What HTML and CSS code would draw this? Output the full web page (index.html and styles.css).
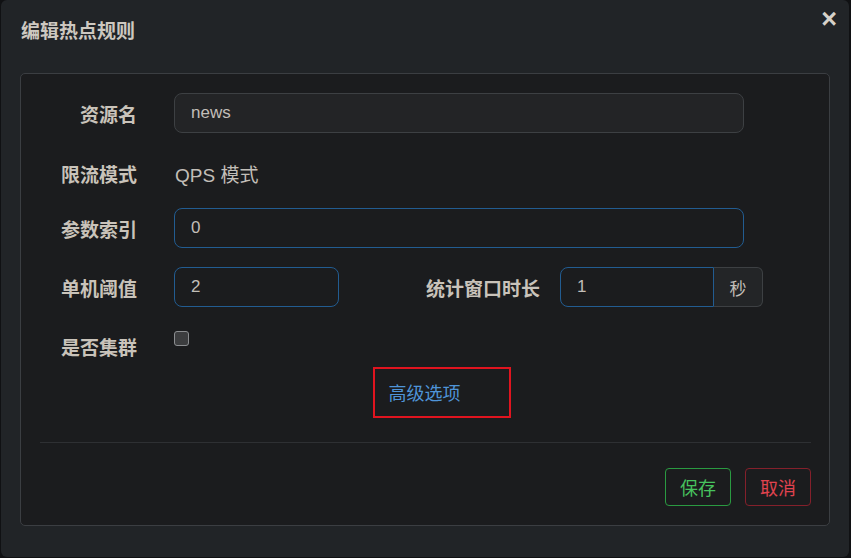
FILE: index.html
```html
<!DOCTYPE html>
<html lang="zh-CN">
<head>
<meta charset="utf-8">
<title>编辑热点规则</title>
<link rel="stylesheet" href="styles.css">
</head>
<body>
<div class="modal">
  <div class="modal-header">
    <h4 class="modal-title">编辑热点规则</h4>
    <button class="close" type="button">×</button>
  </div>
  <div class="card">
    <form class="form">
      <div class="row r1">
        <label class="label">资源名</label>
        <div class="field wide"><input class="input plain" type="text" value="news"></div>
      </div>
      <div class="row r2">
        <label class="label">限流模式</label>
        <div class="static">QPS 模式</div>
      </div>
      <div class="row r3">
        <label class="label">参数索引</label>
        <div class="field wide"><input class="input focus" type="text" value="0"></div>
      </div>
      <div class="row r4">
        <label class="label">单机阈值</label>
        <div class="field narrow"><input class="input focus" type="text" value="2"></div>
        <label class="label label-wide">统计窗口时长</label>
        <div class="input-group">
          <input class="input focus group-input" type="text" value="1">
          <span class="addon">秒</span>
        </div>
      </div>
      <div class="row r5">
        <label class="label">是否集群</label>
        <span class="checkbox"></span>
      </div>
      <div class="advanced">
        <a class="link" href="#">高级选项</a>
      </div>
    </form>
    <div class="divider"></div>
    <div class="footer">
      <button class="btn btn-save" type="button">保存</button>
      <button class="btn btn-cancel" type="button">取消</button>
    </div>
  </div>
</div>
</body>
</html>
```
FILE: styles.css
```css
* { box-sizing: border-box; }
html, body {
  margin: 0;
  padding: 0;
  background: #101113;
  font-family: "Liberation Sans", "Noto Sans CJK SC", sans-serif;
}
body { padding-left: 1px; }
.modal {
  width: 848px;
  height: 557px;
  background: #212427;
  border-radius: 6px;
  padding: 0 19px 0 19px;
  display: flex;
  flex-direction: column;
}
.modal-header {
  height: 73px;
  display: flex;
  align-items: flex-start;
  justify-content: space-between;
}
.modal-title {
  margin: 19px 0 0 1px;
  font-size: 19px;
  font-weight: bold;
  color: #cdc8c0;
  line-height: 26px;
}
.close {
  margin: 7px -7px 0 0;
  background: none;
  border: 0;
  padding: 0;
  font-family: "Liberation Sans", sans-serif;
  font-size: 27px;
  font-weight: bold;
  line-height: 24px;
  color: #d6d1c9;
}
.card {
  height: 453px;
  border: 1px solid #3b3e42;
  border-radius: 5px;
  background: #1b1c1e;
  padding: 19px 18px 19px 19px;
  display: flex;
  flex-direction: column;
}
.form { flex: 1; }
.row {
  display: flex;
  align-items: center;
  height: 40px;
}
.r2 { margin-top: 20px; }
.r3 { margin-top: 15px; }
.r4 { margin-top: 19px; }
.r5 { margin-top: 20px; align-items: flex-start; }
.label {
  width: 98px;
  text-align: right;
  font-size: 19px;
  font-weight: bold;
  color: #c9c3ba;
  margin-left: -1px;
  margin-right: 37px;
  flex-shrink: 0;
}
.r5 .label { margin-top: 6px; }
.label-wide {
  width: auto;
  margin-left: 87px;
  margin-right: 20px;
}
.field.wide { width: 570px; }
.field.narrow { width: 165px; }
.input {
  width: 100%;
  height: 40px;
  border-radius: 8px;
  background: #232426;
  border: 1px solid #3d4043;
  padding: 0 16px;
  font-family: "Liberation Sans", "Noto Sans CJK SC", sans-serif;
  font-size: 17px;
  color: #c2beb8;
  outline: none;
}
.input.focus {
  background: #1b1c1e;
  border-color: #225c91;
}
.static {
  font-size: 19px;
  color: #c2beb8;
  margin-left: 1px;
}
.input-group {
  display: flex;
  width: 203px;
  height: 40px;
}
.group-input {
  width: 154px;
  border-radius: 8px 0 0 8px;
}
.addon {
  flex: 1;
  display: flex;
  align-items: center;
  justify-content: center;
  background: #232527;
  border: 1px solid #3d4043;
  border-left: 0;
  border-radius: 0 6px 6px 0;
  font-size: 17px;
  color: #c2beb8;
}
.checkbox {
  display: block;
  width: 15px;
  height: 15px;
  margin-top: 4px;
  background: #3c3d3f;
  border: 1px solid #8b8d90;
  border-radius: 3px;
}
.advanced {
  margin-top: 12px;
  text-align: center;
  padding-right: 2px;
}
.link {
  position: relative;
  font-size: 18px;
  color: #4f94d8;
  text-decoration: none;
}
.link::after {
  content: "";
  box-sizing: border-box;
  position: absolute;
  left: -16px;
  top: -17px;
  width: 138px;
  height: 51px;
  border: 2px solid #e0141f;
}
.divider {
  height: 1px;
  background: #2e3033;
  margin: 0 0 25px 0;
}
.footer {
  display: flex;
  justify-content: flex-end;
  gap: 14px;
}
.btn {
  width: 66px;
  height: 38px;
  border-radius: 4px;
  background: transparent;
  font-family: "Liberation Sans", "Noto Sans CJK SC", sans-serif;
  font-size: 18px;
  padding: 0;
}
.btn-save {
  border: 1px solid #2a9a41;
  color: #47c35e;
}
.btn-cancel {
  border: 1px solid #84202b;
  color: #e0434f;
}
```
